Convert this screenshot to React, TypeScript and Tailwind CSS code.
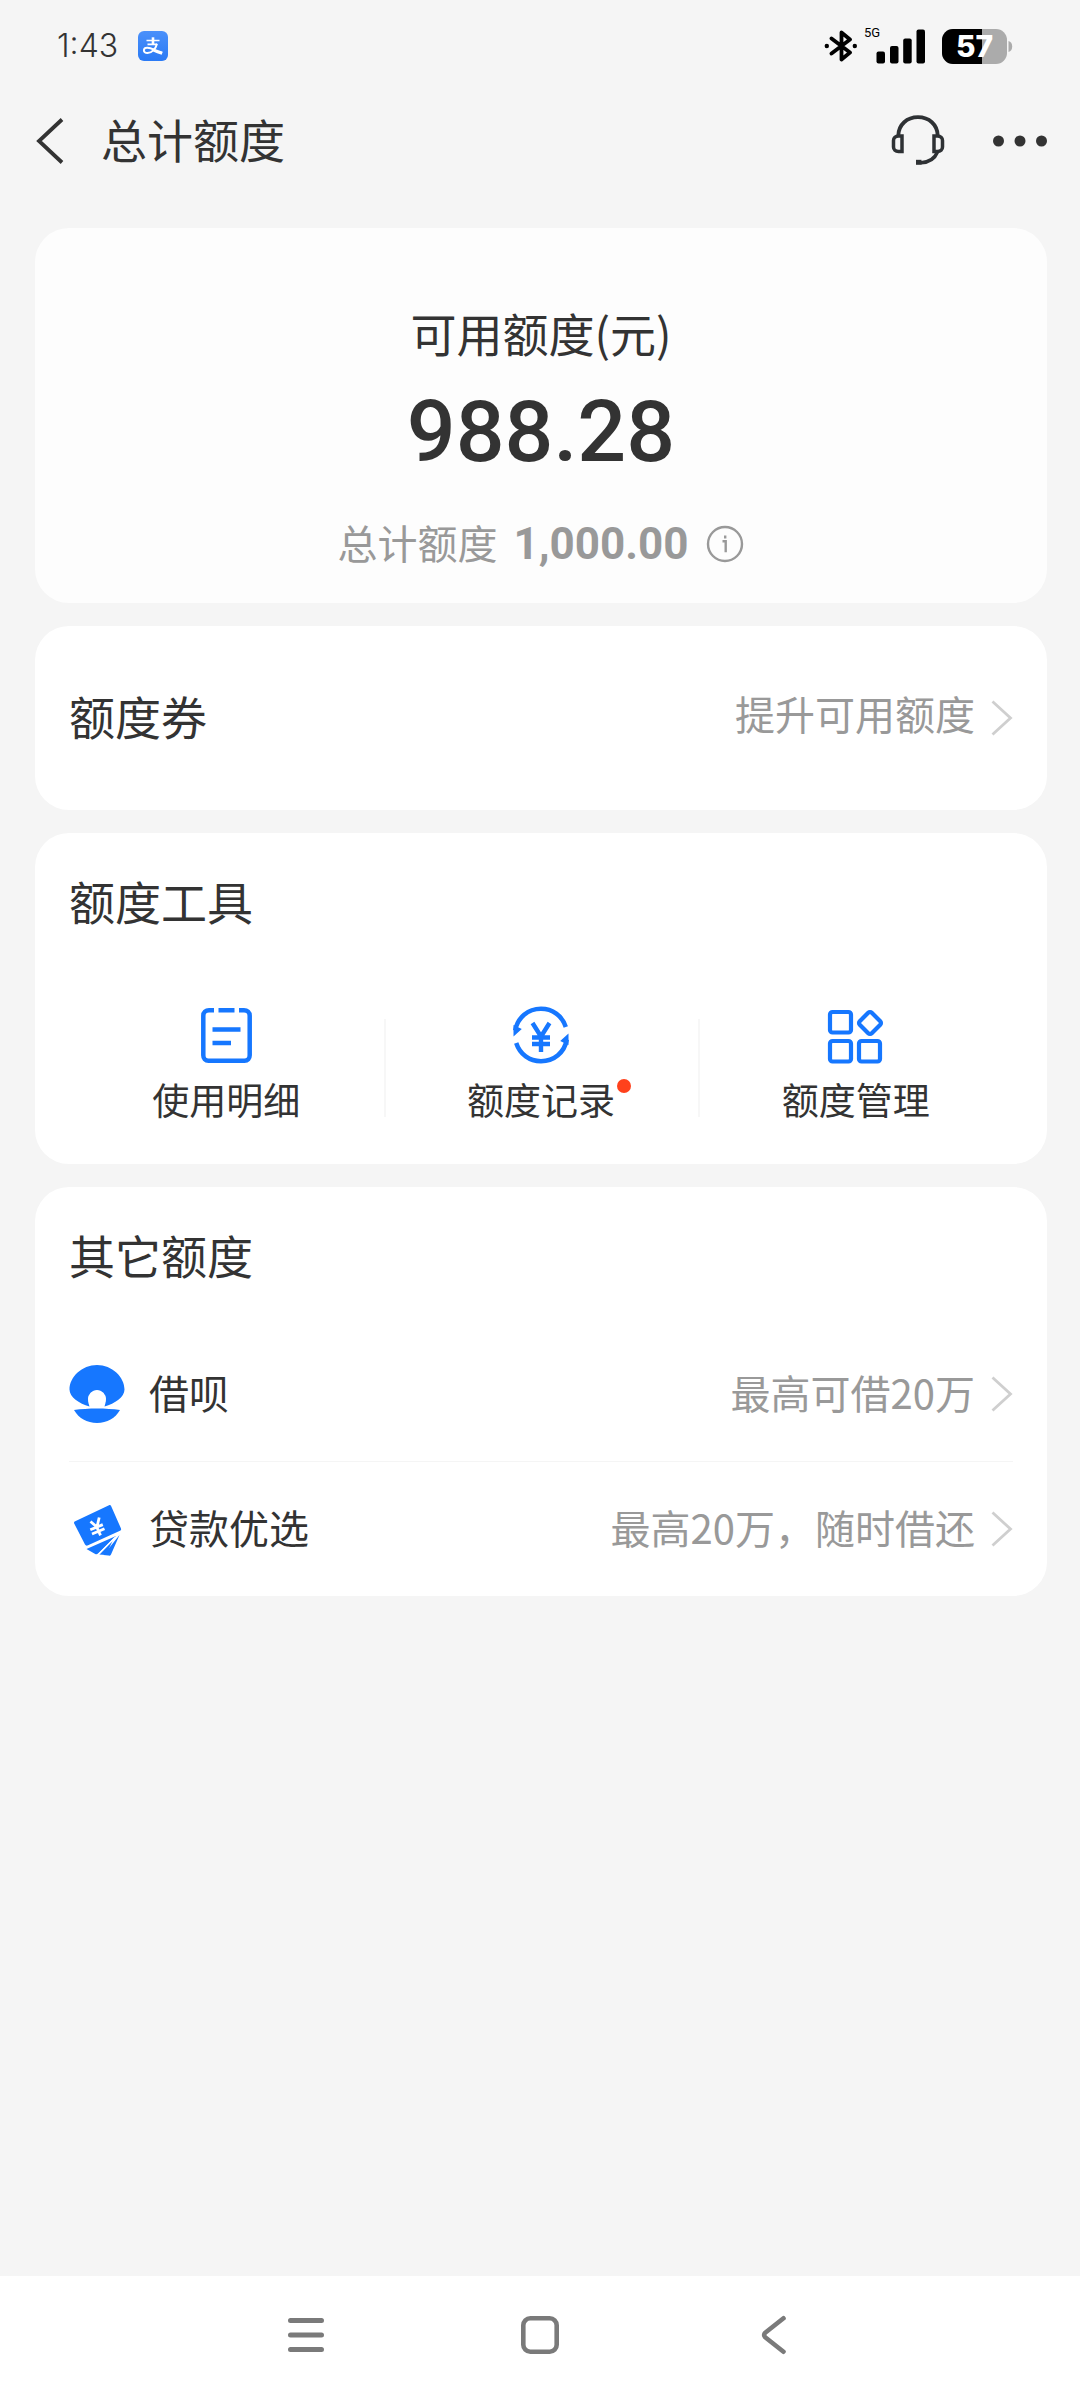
import type { ReactNode } from "react";

function AlipayBadge() {
  return (
    <svg className="h-[30px] w-[30px]" viewBox="0 0 30 30" fill="none">
      <defs>
        <linearGradient id="badge" x1="0" y1="0" x2="0" y2="1">
          <stop offset="0" stopColor="#4a90fa" />
          <stop offset="1" stopColor="#2a7af5" />
        </linearGradient>
      </defs>
      <rect width="30" height="30" rx="6" fill="url(#badge)" />
      <path d="M8.5 9.5h13M9.5 13.3H19" stroke="#fff" strokeWidth="1.7" />
      <path d="M15 6.3v7" stroke="#fff" strokeWidth="2.6" />
      <path d="M19 12.8c-1.2 4.7-4.8 9.2-9.5 9.2-2.4 0-3.7-1.2-3.6-2.8.1-1.5 1.5-2.5 3.6-2.4 4.2.2 8.3 3.2 14.8 4.8" stroke="#fff" strokeWidth="2" />
      <path d="M15.5 19.3c3 .6 5.5 1.2 9 1.4l-.8 3c-3-.6-6-1.9-9.4-3.6z" fill="#fff" />
    </svg>
  );
}

function BluetoothIcon() {
  return (
    <svg className="h-8 w-[34px]" viewBox="0 0 34 32" fill="none">
      <path d="M7.5 8.5 26 22.5l-8.5 7v-27l8.5 7L7.5 23.5" stroke="#000" strokeWidth="3.8" strokeLinejoin="round" strokeLinecap="round" />
      <circle cx="2.8" cy="16" r="2.2" fill="#000" />
      <circle cx="30.8" cy="16" r="2.2" fill="#000" />
    </svg>
  );
}

function SignalIcon() {
  return (
    <svg className="h-[35px] w-[50px]" viewBox="0 0 50 35" fill="#000">
      <rect x="0.5" y="22.5" width="8.5" height="12" rx="2" />
      <rect x="14" y="17" width="8.5" height="17.5" rx="2" />
      <rect x="27.2" y="9.5" width="8.5" height="25" rx="2" />
      <rect x="40.5" y="0.5" width="8.5" height="34" rx="2" />
    </svg>
  );
}

function Battery() {
  return (
    <div className="relative h-[35px] w-[71px]">
      <svg className="h-full w-full" viewBox="0 0 71 35">
        <defs>
          <clipPath id="cell">
            <rect width="65" height="35" rx="11" />
          </clipPath>
        </defs>
        <g clipPath="url(#cell)">
          <rect width="65" height="35" fill="#ababab" />
          <rect width="40" height="35" fill="#000" />
        </g>
        <path d="M66.5 12c2.3.6 3.7 2.5 3.7 5.5s-1.4 4.9-3.7 5.5z" fill="#ababab" />
      </svg>
      <span className="absolute inset-y-0 left-0 flex w-[65px] items-center justify-center font-[Inter,sans-serif] text-[30px] font-extrabold text-white">
        57
      </span>
    </div>
  );
}

function HeadsetIcon() {
  return (
    <svg className="h-[52px] w-[54px]" viewBox="0 0 54 52" fill="none" stroke="#2e3134">
      <path d="M7.3 20.5C7.6 9.5 16 2.2 27 2.2s19.4 7.3 19.7 18.3" strokeWidth="3.8" />
      <path d="M11 21v15.5H7.5c-3 0-5-2-5-4.5v-6.5c0-2.7 2-4.5 5-4.5z" strokeWidth="3.5" />
      <path d="M43 21v15.5h3.5c3 0 5-2 5-4.5v-6.5c0-2.7-2-4.5-5-4.5z" strokeWidth="3.5" />
      <path d="M46.5 37c-2.5 6-8 10.300-16.500 10.700" strokeWidth="3.5" />
      <path d="M25 47.300h5.500" strokeWidth="5" />
    </svg>
  );
}

function Chevron() {
  return (
    <svg className="h-10 w-6 shrink-0" viewBox="0 0 24 40" fill="none">
      <path d="M3.5 3.5 21.5 20l-18 16.5" stroke="#cfcfcf" strokeWidth="2.8" />
    </svg>
  );
}

function DetailIcon() {
  return (
    <svg className="h-16 w-16" viewBox="0 0 64 64" fill="none" stroke="#1677ff" strokeWidth="4.5">
      <path d="M20 7.2h-5c-3.200 0-5.700 2.300-5.700 5.500v39.500c0 3.200 2 5.500 5.200 5.500h36c3.200 0 5.200-2.300 5.200-5.500V12.700c0-3.200-2.500-5.500-5.700-5.500h-5" />
      <path d="M24.500 7.200h16M18.500 26.500h28M18.500 40H37" />
    </svg>
  );
}

function RecordIcon() {
  return (
    <svg className="h-16 w-16" viewBox="0 0 64 64" fill="none" stroke="#1677ff" strokeWidth="4.5">
      <path d="M6.2 27.5C8.5 14.5 19 5.8 32 5.8c11.5 0 21 6.700 24.800 18.200" />
      <path d="M57.8 36.5C55.5 49.5 45 58.2 32 58.2 20.5 58.2 11 51.5 7.200 40" />
      <path d="M4.5 22v11.500l8.300-7.500zM59.500 42V30.500l-8.300 7.500z" fill="#1677ff" stroke="none" />
      <path d="M23.5 20 32 33.5 40.500 20M23 34.500h18M23 41h18M32 33v16" strokeWidth="4.4" />
    </svg>
  );
}

function ManageIcon() {
  return (
    <svg className="h-16 w-16" viewBox="0 0 64 64" fill="none" stroke="#1677ff" strokeWidth="4.2" strokeLinejoin="round">
      <rect x="6" y="9" width="21" height="20.5" rx="2.5" />
      <rect x="6" y="38" width="21" height="20.5" rx="2.5" />
      <rect x="35" y="38" width="21" height="20.5" rx="2.5" />
      <rect x="37.5" y="11.5" width="17" height="17" rx="2.5" transform="rotate(45 46 20)" />
    </svg>
  );
}

function ShellIcon() {
  return (
    <svg className="h-[60px] w-14" viewBox="0 0 56 60" fill="#1677ff">
      <path d="M20.5 42.5C10 39.5.5 33 .5 25.5.5 13 13 1 28 1s27.500 12 27.500 24.500c0 7.500-9.500 14-20 17 3.500-9-1-16-7.500-16s-11 7-7.500 16z" />
      <circle cx="28" cy="35" r="9" fill="#fff" />
      <path d="M5 46c14-2 32-2 46 0-4.500 8-13 13-23 13S9.500 54 5 46z" />
    </svg>
  );
}

function LoanIcon() {
  return (
    <svg className="h-[60px] w-14" viewBox="0 0 56 60" fill="#1677ff">
      {/* cards fanned out under the front one */}
      <path d="M17.500 50 47 37 29 54.500c-.8.800-1.800.9-2.800.4z" />
      <path d="M30 55.500 43.500 42 37 56z" />
      <path d="M34.500 56 50.500 36 42 55.500c-.5 1-1.500 1.400-2.600 1.100z" />
      <path d="M29.500 55.500 46 38.500" stroke="#fff" strokeWidth="1.4" />
      <path d="M6.2 22.3 40 6.200c1-.4 1.800 0 2.200 1L52 29.500c.4 1 0 1.800-1 2.300L18.500 46.500c-1 .4-2 0-2.500-1L5.200 24.500c-.5-1-.1-1.800 1-2.200z" />
      <path d="m21.500 22.500 6.500 5.500 2.200-9.500M21.300 30.800l12.500-5.200M23 35l12.500-5.200M27.500 27.500l4 8.800" stroke="#fff" strokeWidth="2.8" fill="none" />
    </svg>
  );
}

function Card({ children, className = "bg-white" }: { children: ReactNode; className?: string }) {
  return <section className={`rounded-[34px] px-[34px] ${className}`}>{children}</section>;
}

const tools = [
  { label: "使用明细", icon: <DetailIcon />, dot: false },
  { label: "额度记录", icon: <RecordIcon />, dot: true },
  { label: "额度管理", icon: <ManageIcon />, dot: false },
];

const others = [
  { name: "借呗", note: "最高可借20万", icon: <ShellIcon /> },
  { name: "贷款优选", note: "最高20万，随时借还", icon: <LoanIcon /> },
];

export default function App() {
  return (
    <div className="flex min-h-screen flex-col bg-[#f5f5f5] font-['Noto_Sans_CJK_SC',sans-serif] text-[#333]">
      {/* Status bar */}
      <div className="flex h-[92px] items-center justify-between pr-[67px] pl-[57px]">
        <div className="flex items-center gap-5">
          <span className="font-[Inter,sans-serif] text-[32px] font-light">1:43</span>
          <AlipayBadge />
        </div>
        <div className="flex items-center">
          <BluetoothIcon />
          <span className="relative mr-4 ml-[18px]">
            <span className="absolute -top-1 -left-3 font-[Roboto,sans-serif] text-[13px] leading-4 text-black">
              5G
            </span>
            <SignalIcon />
          </span>
          <Battery />
        </div>
      </div>

      {/* Title bar */}
      <header className="flex h-[98px] items-center justify-between pr-8 pl-[35px]">
        <div className="flex items-center gap-9">
          <button type="button" aria-label="返回">
            <svg className="h-12 w-[30px]" viewBox="0 0 30 48" fill="none">
              <path d="M27 2.5 4 24l23 21.5" stroke="#333" strokeWidth="3.8" />
            </svg>
          </button>
          <h1 className="pb-1.5 text-[46px] leading-[70px]">总计额度</h1>
        </div>
        <div className="flex items-center gap-[47px]">
          <button type="button" aria-label="客服">
            <HeadsetIcon />
          </button>
          <button type="button" aria-label="更多">
            <svg className="h-3 w-14" viewBox="0 0 56 12" fill="#333">
              <circle cx="6.5" cy="6" r="5.5" />
              <circle cx="28" cy="6" r="5.5" />
              <circle cx="49.5" cy="6" r="5.5" />
            </svg>
          </button>
        </div>
      </header>

      <main className="flex flex-1 flex-col gap-[23px] pt-[38px] pr-[33px] pl-[35px]">
        <Card className="bg-[#fdfdfd] pt-[69px] pb-[27px] text-center">
          <h2 className="text-[46px] leading-[70px]">可用额度(元)</h2>
          <p className="mt-[17px] font-[Roboto,sans-serif] text-[86px] leading-[96px] font-medium">988.28</p>
          <div className="mt-8 flex items-center justify-center gap-4 text-[40px] leading-[60px] text-[#999]">
            <span className="pb-1">总计额度</span>
            <span className="font-[Roboto,sans-serif] text-[44px] font-bold">1,000.00</span>
            <button type="button" aria-label="额度说明">
              <svg className="h-10 w-10" viewBox="0 0 40 40" fill="none" stroke="#999" strokeWidth="2.4">
                <circle cx="20" cy="20" r="17" />
                <path d="M17.5 17.3h3.2v11M20.2 11.5v3" />
              </svg>
            </button>
          </div>
        </Card>

        <Card>
          <a href="#coupon" className="flex items-center justify-between py-[54px]">
            <h2 className="pb-1.5 text-[46px] leading-[70px]">额度券</h2>
            <span className="flex items-center gap-3.5 text-[40px] leading-[60px] text-[#999]">
              <span className="pb-2.5">提升可用额度</span>
              <Chevron />
            </span>
          </a>
        </Card>

        <Card className="bg-white pt-8 pb-[37px]">
          <h2 className="text-[46px] leading-[70px]">额度工具</h2>
          <div className="mt-[68px] grid grid-cols-3">
            {tools.map(({ label, icon, dot }, i) => (
              <div key={label} className="relative">
                {i > 0 && <span className="absolute top-4 left-0 h-[98px] w-0.5 bg-[#f7f7f7]" />}
                <button type="button" className="flex w-full flex-col items-center gap-1">
                  {icon}
                  <span className="relative text-[37px] leading-[56px]">
                    {label}
                    {dot && <span className="absolute top-2 -right-4 h-3.5 w-3.5 rounded-full bg-[#ff411c]" />}
                  </span>
                </button>
              </div>
            ))}
          </div>
        </Card>

        <Card className="bg-white pt-8">
          <h2 className="text-[46px] leading-[70px]">其它额度</h2>
          <ul className="mt-[38px] divide-y divide-[#f5f5f5]">
            {others.map(({ name, note, icon }) => (
              <li key={name}>
                <a href="#quota" className="flex h-[134px] items-center justify-between text-[40px] leading-[60px]">
                  <span className="flex items-center gap-6">
                    {icon}
                    <span className="pb-1">{name}</span>
                  </span>
                  <span className="flex items-center gap-3.5 text-[#999]">
                    <span className="pb-1">{note}</span>
                    <Chevron />
                  </span>
                </a>
              </li>
            ))}
          </ul>
        </Card>
      </main>

      {/* System navigation */}
      <nav className="flex h-[124px] items-center justify-center bg-white pb-1.5">
        <button type="button" aria-label="最近任务" className="flex w-[234px] justify-center">
          <svg className="h-10 w-10" viewBox="0 0 40 40" stroke="#7a7a7a" strokeWidth="5" strokeLinecap="round">
            <path d="M4.5 5.5h31M4.5 20h31M4.5 34.5h31" />
          </svg>
        </button>
        <button type="button" aria-label="主屏幕" className="flex w-[234px] justify-center">
          <svg className="h-10 w-10" viewBox="0 0 40 40" fill="none" stroke="#7a7a7a" strokeWidth="4.6">
            <rect x="3.3" y="3.3" width="33.4" height="33.4" rx="7" />
          </svg>
        </button>
        <button type="button" aria-label="返回上一页" className="flex w-[234px] justify-center">
          <svg className="h-10 w-10" viewBox="0 0 40 40" fill="none" stroke="#7a7a7a" strokeWidth="4.6" strokeLinecap="round">
            <path d="M29.5 3.3l-18 14.2c-1.9 1.5-1.9 3.5 0 5l18 14.2" />
          </svg>
        </button>
      </nav>
    </div>
  );
}
